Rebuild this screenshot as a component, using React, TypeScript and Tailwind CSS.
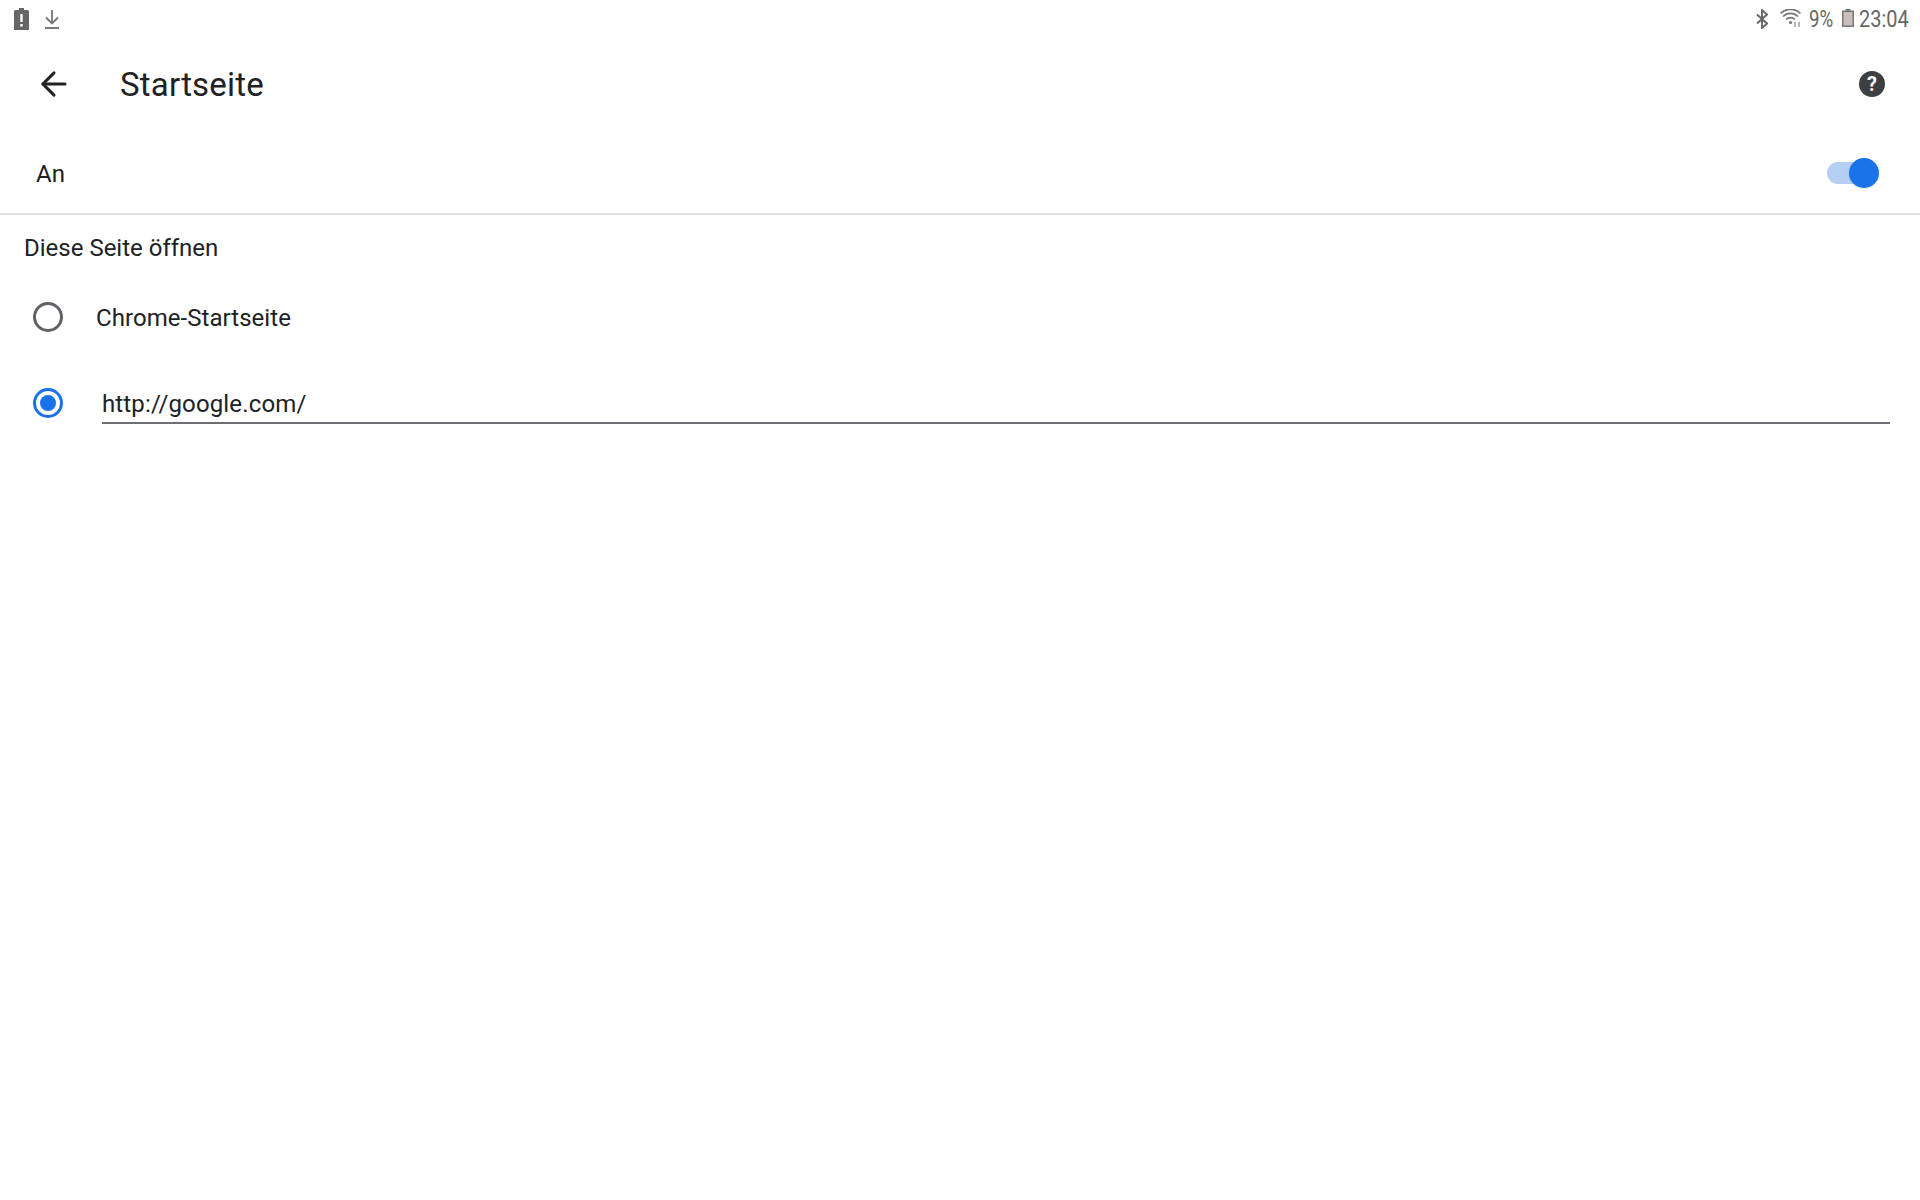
import React from 'react'
import { ArrowLeft } from 'lucide-react'

const StatusBar = () => {
    return (
        <div className="flex h-[38px] items-center justify-between pl-[14px] pr-[12px] text-[#666666]">
            <div className="flex items-center gap-[16px]">
                <svg width="15" height="22" viewBox="0 0 15 22" className="mb-[1px]">
                    <path fill="#666666" d="M5 0h5v2h3.500a1.500 1.500 0 0 1 1.500 1.500V22H0V3.500A1.500 1.500 0 0 1 1.500 2H5z" />
                    <rect x="6.300" y="6" width="2.400" height="8" fill="#ffffff" />
                    <rect x="6.300" y="16" width="2.400" height="2.600" fill="#ffffff" />
                </svg>
                <svg width="14" height="19" viewBox="0 0 14 19" fill="none" stroke="#777777" strokeWidth="1.800">
                    <path d="M7 0v13M1 7.500l6 6 6-6M0 18h14" />
                </svg>
            </div>
            <div className="flex items-center font-['Roboto',sans-serif] text-[24px] leading-none">
                <svg width="12" height="20" viewBox="0 0 12 20" fill="none" stroke="#666666" strokeWidth="1.900">
                    <path d="M1 5.500l10 9-5 4.500V1l5 4.500-10 9" />
                </svg>
                <svg width="22" height="18" viewBox="0 0 22 18" fill="none" stroke="#777777" strokeWidth="1.700" className="ml-[12px] mb-[3px]">
                    <path d="M0.500 4.500a14 14 0 0 1 20 0M3 7.500a10.500 10.500 0 0 1 15 0M6 10.500a6.500 6.500 0 0 1 9 0" />
                    <circle cx="10.500" cy="13.500" r="1.600" fill="#777777" stroke="none" />
                    <path d="M15 13v5M19 18v-5" stroke="#aaaaaa" />
                </svg>
                <span className="ml-[7px] w-[25px] origin-left scale-x-[0.78] whitespace-nowrap">9%</span>
                <svg width="12" height="18" viewBox="0 0 12 18" className="ml-[8px] mb-[3px]">
                    <path fill="#777777" d="M3.500 0h5v1.500H12V18H0V1.500h3.500z" />
                    <rect x="1.500" y="3" width="9" height="13.500" fill="#c9c0bc" />
                </svg>
                <span className="ml-[5px] w-[49px] origin-left scale-x-[0.83] whitespace-nowrap">23:04</span>
            </div>
        </div>
    )
}

const Radio = ({ checked }: { checked?: boolean }) => {
    if (checked) {
        return (
            <div className="flex h-[30px] w-[30px] shrink-0 items-center justify-center rounded-full border-[3px] border-[#1a73e8]">
                <div className="h-[16px] w-[16px] rounded-full bg-[#1a73e8]"></div>
            </div>
        )
    }
    return <div className="h-[30px] w-[30px] shrink-0 rounded-full border-[3px] border-[#5f6368]"></div>
}

const App = () => {
    return (
        <div className="h-[1200px] w-[1920px] overflow-hidden bg-white font-['Roboto',sans-serif] text-[#202124]">
            <StatusBar />

            {/* header */}
            <div className="flex h-[92px] items-center justify-between pl-[35px] pr-[35px]">
                <div className="flex items-center">
                    <ArrowLeft size={38} strokeWidth={1.900} color="#202124" />
                    <h1 className="ml-[47px] text-[33px] leading-none font-normal tracking-[0.2px]">Startseite</h1>
                </div>
                <div className="flex h-[26px] w-[26px] items-center justify-center rounded-full bg-[#3c4043] text-[20px] leading-none font-bold text-white">?</div>
            </div>

            {/* switch */}
            <div className="flex h-[85px] items-center justify-between border-b-[2px] border-b-[#e0e0e0] pl-[36px] pr-[43px] pt-[4px]">
                <span className="text-[24px]">An</span>
                <div className="relative mb-[2px] h-[22px] w-[50px] rounded-full bg-[#b5cff5]">
                    <div className="absolute right-[-2px] top-[-4px] h-[30px] w-[30px] rounded-full bg-[#1a73e8] shadow-sm"></div>
                </div>
            </div>

            <div className="pl-[24px] pt-[17px] text-[24px] leading-[32px]">Diese Seite öffnen</div>

            <div className="mt-[28px] flex h-[50px] items-center pl-[33px]">
                <Radio />
                <span className="ml-[33px] pt-[1px] text-[24px] tracking-[0.05px]">Chrome-Startseite</span>
            </div>

            <div className="mt-[40px] flex items-center pl-[33px] pr-[30px]">
                <Radio checked />
                <div className="ml-[39px] h-[42px] flex-1 border-b-[2px] border-b-[#6b6f73] text-[24px] leading-[44px] tracking-[0.15px]">http://google.com/</div>
            </div>
        </div>
    )
}

export default App
